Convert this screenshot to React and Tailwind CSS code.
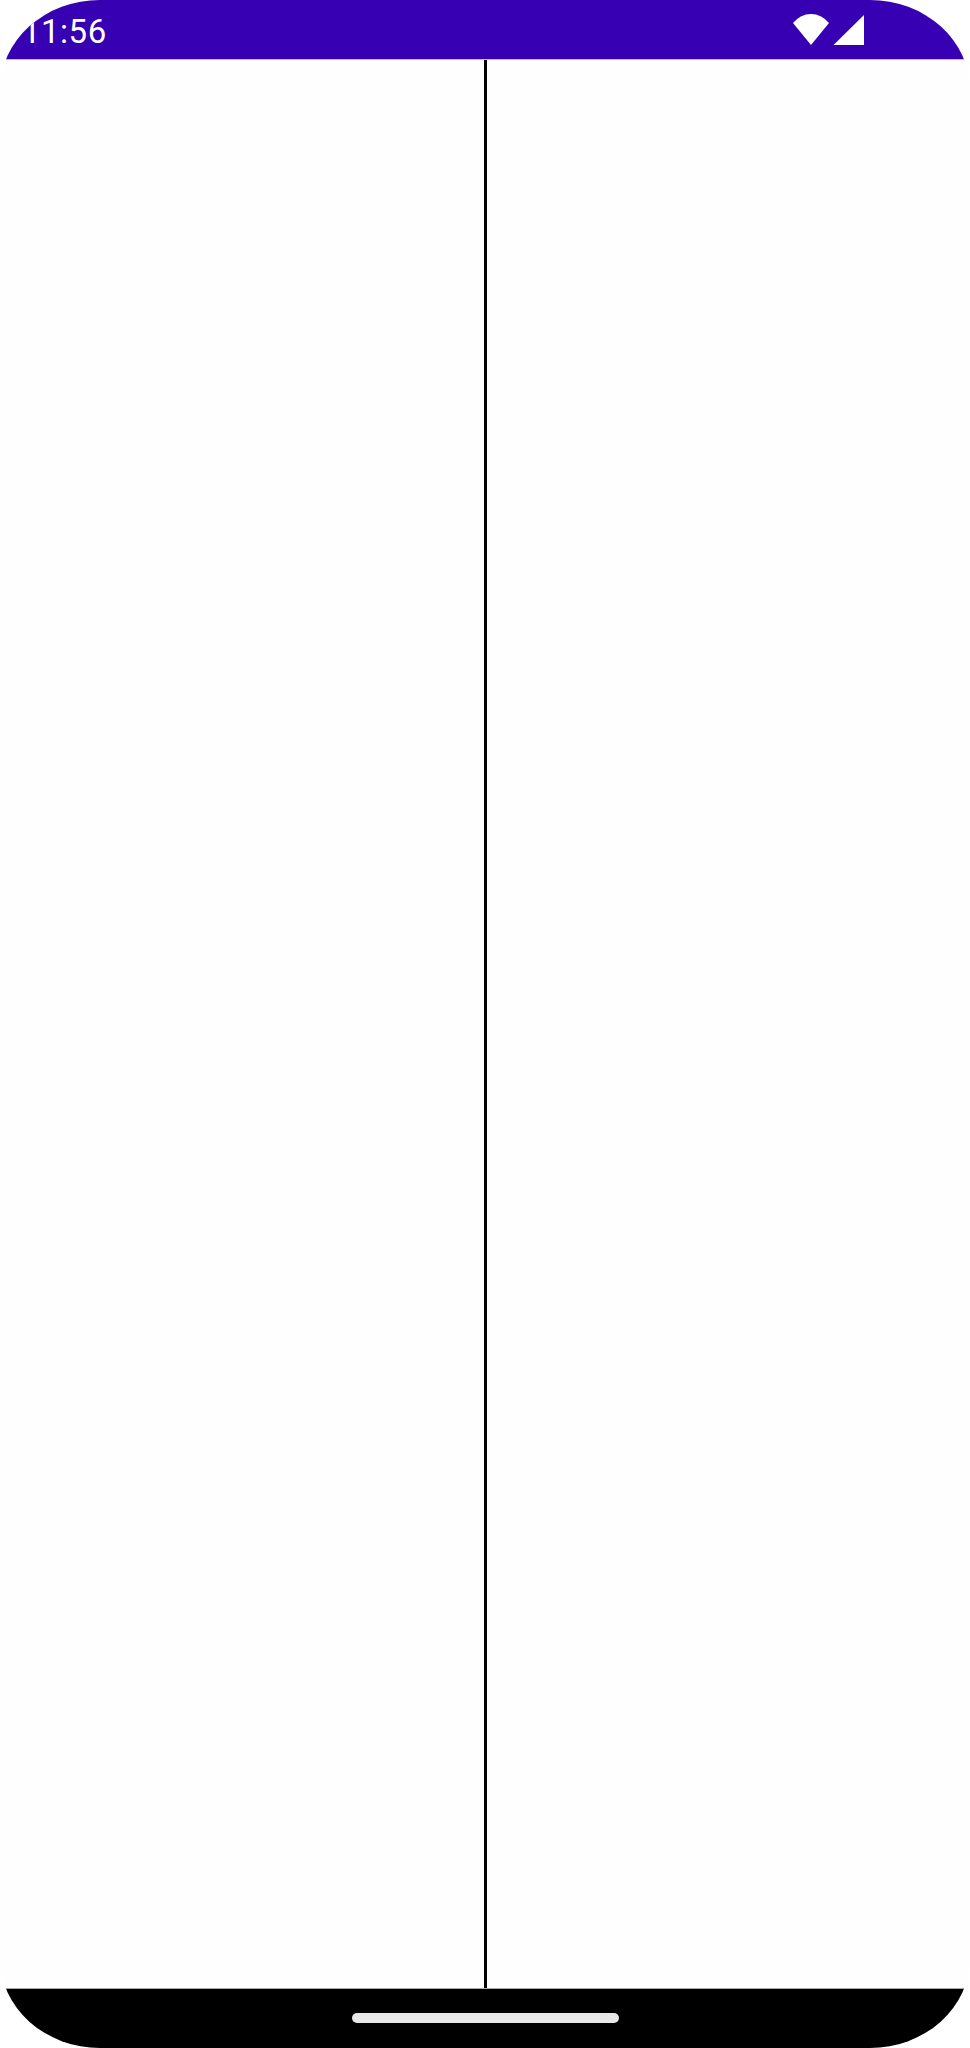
function StatusBar() {
  return (
    <div className="flex h-[60px] shrink-0 items-center justify-between border-b border-b-[#c9b8ee] bg-[#3700b3] pl-[22px] pr-[106px]">
      <span className="mt-[3px] font-['Roboto',sans-serif] text-[33px] leading-none tracking-[0.5px] text-white">11:56</span>
      <div className="mt-[2px] flex items-center gap-[3px]">
        {/* wifi */}
        <svg width="38" height="31" viewBox="0 0 38 31" className="mt-[-2px]">
          <path d="M1 9 A22.5 22.5 0 0 1 37 9 L19 31 Z" fill="#fff" />
        </svg>
        {/* signal */}
        <svg width="31" height="30" viewBox="0 0 31 30" className="mt-[-1px]">
          <path d="M0.5 30 L31 0 L31 30 Z" fill="#fff" />
        </svg>
      </div>
    </div>
  )
}

function NavBar() {
  return (
    <div className="flex h-[60px] shrink-0 items-start justify-center border-t border-t-[#a8a8a8] bg-black pt-[24px]">
      <div className="h-[10px] w-[267px] rounded-full bg-[#e8e8e8]" />
    </div>
  )
}

export default function App() {
  return (
    <div className="flex h-[2048px] w-[970px] flex-col overflow-hidden rounded-[100px/90px] bg-[#fefefe]">
      <StatusBar />
      <div className="flex flex-1 justify-center">
        <div className="w-[3px] bg-black" />
      </div>
      <NavBar />
    </div>
  )
}
